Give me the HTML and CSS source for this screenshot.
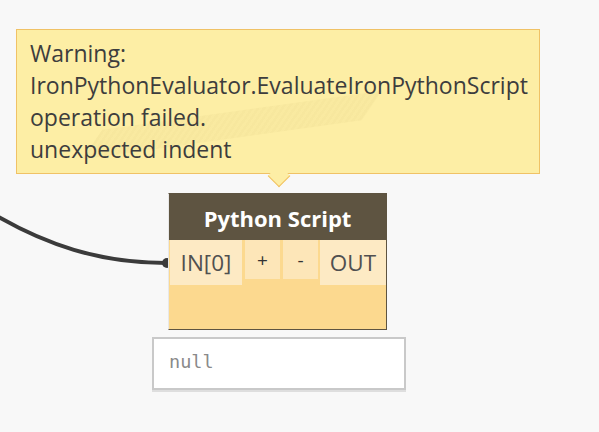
FILE: index.html
```html
<!DOCTYPE html>
<html>
<head>
<meta charset="utf-8">
<link rel="stylesheet" href="styles.css">
</head>
<body>
<div class="canvas">
  <svg class="wire" width="599" height="432" viewBox="0 0 599 432">
    <path d="M -10 212 C 45 245, 100 263, 166 263" fill="none" stroke="#3b3b3b" stroke-width="4"/>
    <circle cx="167" cy="263" r="5" fill="#3b3b3b"/>
  </svg>

  <div class="tooltip">
    <div class="ghost"></div>
    <div class="tip-text">Warning:<br>IronPythonEvaluator.EvaluateIronPythonScript<br>operation failed.<br>unexpected indent</div>
  </div>

  <div class="node">
    <div class="node-title">Python Script</div>
    <div class="ports">
      <div class="port in">IN[0]</div>
      <div class="btn">+</div>
      <div class="btn">-</div>
      <div class="port out">OUT</div>
    </div>
    <div class="node-body"></div>
  </div>

  <div class="preview">null</div>
</div>
</body>
</html>
```
FILE: styles.css
```css
html, body {
  margin: 0;
  padding: 0;
  background: #f8f8f8;
}
.canvas {
  position: relative;
  width: 599px;
  height: 432px;
  overflow: hidden;
  font-family: "Open Sans", "Noto Sans", sans-serif;
}
.wire {
  position: absolute;
  left: 0;
  top: 0;
}
.tooltip {
  position: absolute;
  left: 16px;
  top: 29px;
  width: 522px;
  height: 143px;
  background: #fdeea5;
  border: 1px solid #f0c266;
  box-sizing: content-box;
}
.tooltip::after {
  content: "";
  position: absolute;
  left: 254px;
  bottom: -11px;
  width: 15px;
  height: 15px;
  background: #fdeea5;
  border-right: 1px solid #f0c266;
  border-bottom: 1px solid #f0c266;
  transform: rotate(45deg);
}
.ghost {
  position: absolute;
  left: 90px;
  top: 80px;
  width: 250px;
  height: 30px;
  background: repeating-linear-gradient(90deg, rgba(215, 195, 120, 0.16) 0 3px, rgba(215, 195, 120, 0.10) 3px 6px);
  transform: skewX(-40deg) rotate(-9deg);
}
.tip-text {
  position: relative;
  padding: 7px 0 0 13px;
  font-size: 23px;
  line-height: 32px;
  color: #3d3d3d;
  white-space: nowrap;
}
.node {
  position: absolute;
  left: 168px;
  top: 193px;
  width: 219px;
  height: 137px;
  box-sizing: border-box;
  border: 1px solid #5e5441;
  border-left: 1px solid #e8e8e8;
  display: flex;
  flex-direction: column;
  background: #fcd98f;
}
.node-title {
  height: 46px;
  background: #5e5441;
  color: #ffffff;
  font-weight: bold;
  font-size: 22px;
  display: flex;
  align-items: center;
  justify-content: center;
  padding-top: 1px;
  box-sizing: border-box;
}
.ports {
  display: flex;
  align-items: flex-start;
  gap: 3px;
  padding-left: 1px;
}
.port {
  height: 45px;
  background: #fdeac4;
  color: #505050;
  font-size: 22.5px;
  display: flex;
  align-items: center;
  justify-content: center;
}
.port.in { width: 72px; }
.port.out { width: 66px; margin-left: -1px; }
.btn {
  width: 35px;
  height: 39px;
  background: #fde6b8;
  color: #333;
  font-size: 19px;
  display: flex;
  align-items: center;
  justify-content: center;
}
.node-body {
  flex: 1;
}
.preview {
  position: absolute;
  left: 152px;
  top: 337px;
  width: 254px;
  height: 53px;
  box-sizing: border-box;
  background: #ffffff;
  border: 2px solid #c9c9c9;
  box-shadow: 0 2px 0 #dedede;
  font-family: "DejaVu Sans Mono", monospace;
  font-size: 18.5px;
  color: #8a8a8a;
  padding: 12px 0 0 15px;
}
```
